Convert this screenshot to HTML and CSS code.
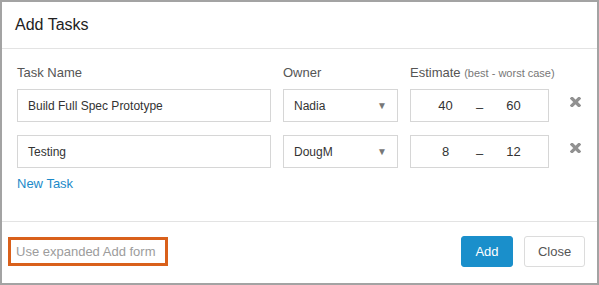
FILE: index.html
```html
<!DOCTYPE html>
<html lang="en">
<head>
    <meta charset="UTF-8">
    <title>Add Tasks</title>
    <link rel="stylesheet" href="styles.css">
</head>
<body>
    <div class="modal">
        <div class="modal-header">
            <h2>Add Tasks</h2>
        </div>

        <div class="modal-body">
            <div class="task-grid">
                <div class="label">Task Name</div>
                <div class="label">Owner</div>
                <div class="label">Estimate <small>(best - worst case)</small></div>
                <div></div>

                <div class="field">Build Full Spec Prototype</div>
                <div class="field select">Nadia <span class="arrow">&#9660;</span></div>
                <div class="field estimate"><span>40</span><span class="dash">&ndash;</span><span>60</span></div>
                <div class="remove">
                    <svg width="11" height="10" viewBox="0 0 11 10"><path d="M2 1.5 L9 8.5 M9 1.5 L2 8.5" stroke="#919191" stroke-width="3.2" stroke-linecap="square"/></svg>
                </div>

                <div class="field">Testing</div>
                <div class="field select">DougM <span class="arrow">&#9660;</span></div>
                <div class="field estimate"><span>8</span><span class="dash">&ndash;</span><span>12</span></div>
                <div class="remove">
                    <svg width="11" height="10" viewBox="0 0 11 10"><path d="M2 1.5 L9 8.5 M9 1.5 L2 8.5" stroke="#919191" stroke-width="3.2" stroke-linecap="square"/></svg>
                </div>
            </div>
            <a class="new-task" href="#">New Task</a>
        </div>

        <div class="modal-footer">
            <span class="highlight"><a class="expanded-link" href="#">Use expanded Add form</a></span>
            <div class="buttons">
                <button class="btn primary">Add</button>
                <button class="btn">Close</button>
            </div>
        </div>
    </div>
</body>
</html>
```

FILE: styles.css
```css
* {
    margin: 0;
    padding: 0;
    box-sizing: border-box;
    font-family: "Liberation Sans", Arial, sans-serif;
}

body {
    background: #fff;
    width: 599px;
    height: 285px;
}

.modal {
    width: 599px;
    height: 285px;
    border: 2px solid #a3a3a3;
    background: #fff;
    display: flex;
    flex-direction: column;
}

.modal-header {
    height: 47px;
    border-bottom: 1px solid #e3e3e3;
    padding: 0 13px;
    display: flex;
    align-items: center;
}

.modal-header h2 {
    font-size: 16px;
    font-weight: normal;
    color: #222;
}

.modal-body {
    padding: 16px 15px 29px 15px;
    border-bottom: 1px solid #e3e3e3;
}

.task-grid {
    display: grid;
    grid-template-columns: 254px 115px 139px 30px;
    column-gap: 12px;
    row-gap: 13px;
    align-items: center;
}

.label {
    font-size: 13px;
    color: #555;
    line-height: 16px;
    margin-bottom: -5px;
    white-space: nowrap;
}

.label small {
    font-size: 11px;
    color: #777;
}

.field {
    height: 33px;
    border: 1px solid #d6d6d6;
    padding: 0 10px;
    font-size: 12px;
    color: #333;
    display: flex;
    align-items: center;
}

.select {
    justify-content: space-between;
    padding-right: 10px;
}

.arrow {
    font-size: 10px;
    color: #777;
}

.estimate {
    display: grid;
    grid-template-columns: 40px 28px 40px;
    justify-content: center;
    padding: 0;
    font-size: 13px;
}

.estimate span {
    text-align: center;
}

.dash {
    position: relative;
    top: 2px;
}

.remove {
    padding-left: 9px;
    display: flex;
    align-self: start;
    margin-top: 8px;
}

.new-task {
    display: inline-block;
    margin-top: 8px;
    font-size: 13px;
    color: #1c8ac9;
    text-decoration: none;
    line-height: 16px;
}

.modal-footer {
    flex: 1;
    display: flex;
    align-items: center;
    justify-content: space-between;
    padding: 0 12px 2px 6px;
}

.highlight {
    border: 3px solid #d9601b;
    padding: 4px 10px 4px 5px;
}

.expanded-link {
    font-size: 13px;
    color: #9c9c9c;
    text-decoration: none;
    line-height: 15px;
    display: block;
}

.buttons {
    display: flex;
    gap: 11px;
}

.btn {
    height: 31px;
    padding: 0 12px;
    border: 1px solid #dcdcdc;
    border-radius: 3px;
    background: #fff;
    color: #555;
    font-size: 13px;
    min-width: 52px;
}

.btn.primary {
    background: #1a8fcb;
    border-color: #1a8fcb;
    color: #fff;
}

.btn:last-child {
    width: 61px;
}
```
